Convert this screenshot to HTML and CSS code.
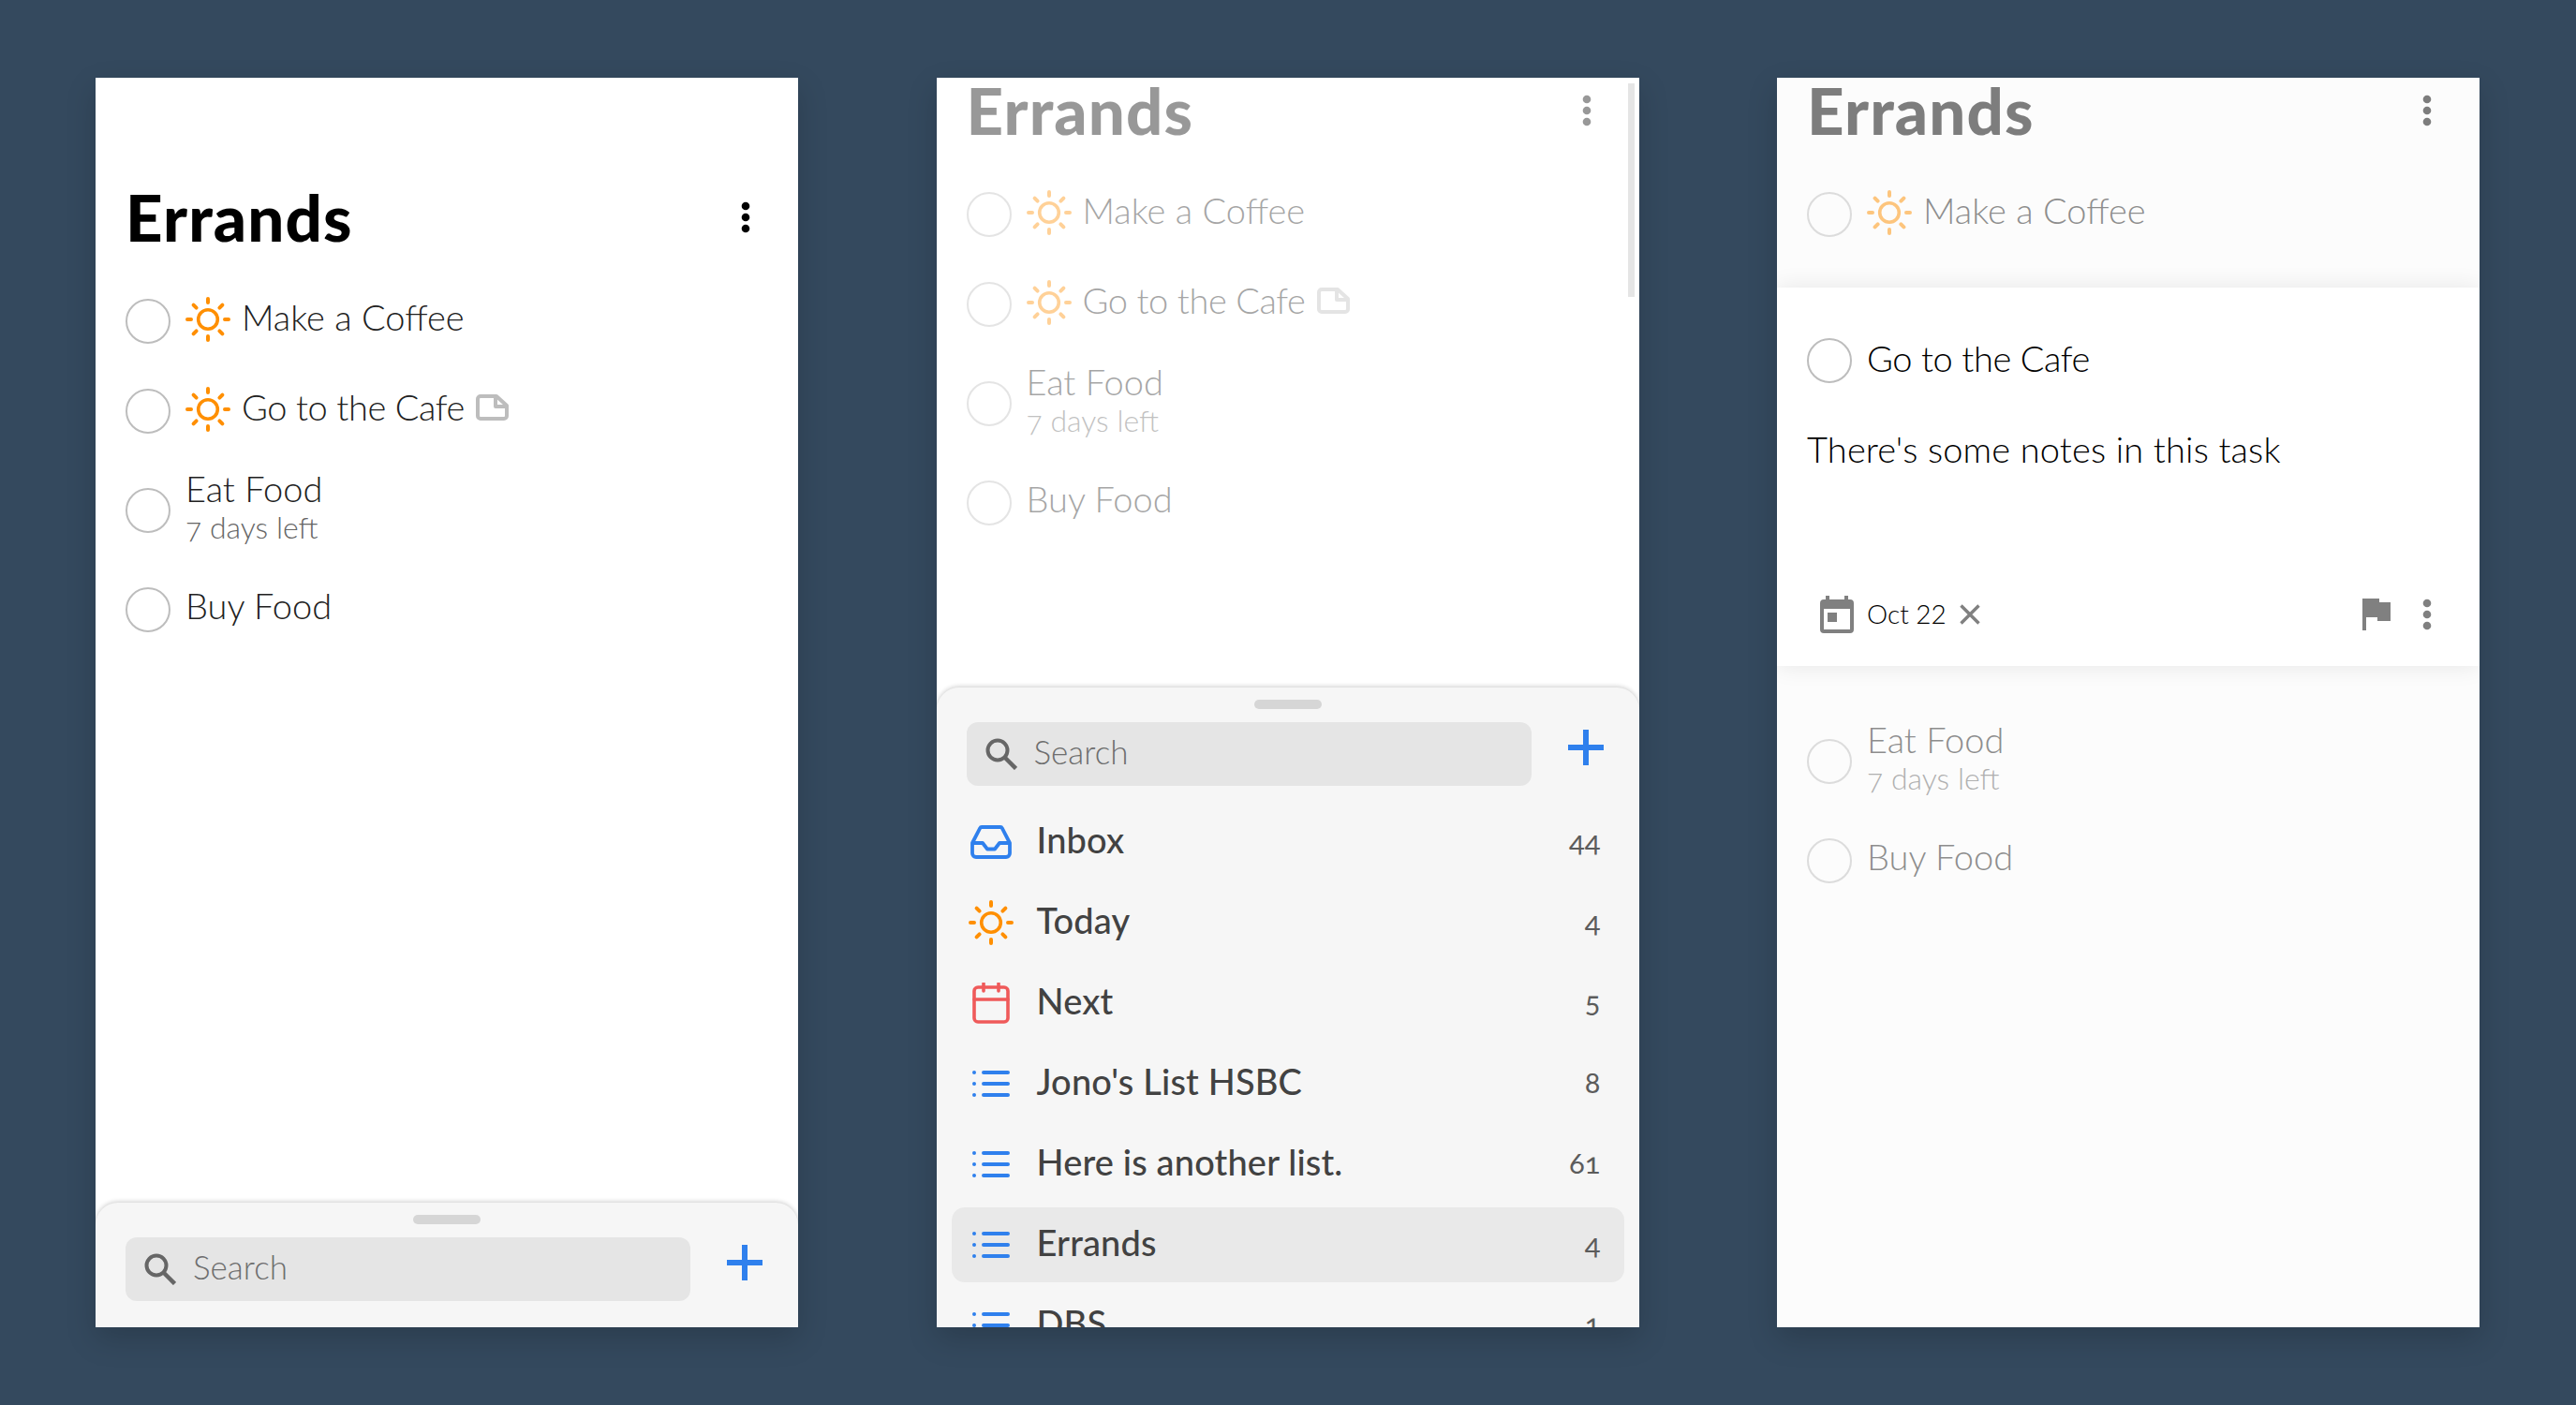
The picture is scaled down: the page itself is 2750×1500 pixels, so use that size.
FILE: index.html
```html
<!DOCTYPE html>
<html lang="en">
<head>
  <meta charset="UTF-8">
  <title>Errands</title>
  <link rel="stylesheet" href="styles.css">
</head>
<body>
  <svg class="sprite" xmlns="http://www.w3.org/2000/svg">
    <symbol id="sun" viewBox="0 0 48 48">
      <circle cx="24" cy="24" r="10.3" fill="none" stroke="currentColor" stroke-width="3.6"/>
      <path d="M24 2v4M24 42v4M2 24h4M42 24h4M8.6 8.6l3 3M36.4 36.4l3 3M8.6 39.4l3-3M36.4 11.6l3-3" fill="none" stroke="currentColor" stroke-width="4" stroke-linecap="round"/>
    </symbol>
    <symbol id="note" viewBox="0 0 35 28">
      <path d="M2 5a3 3 0 0 1 3-3h17l11 10v11a3 3 0 0 1-3 3H5a3 3 0 0 1-3-3z M21 2v11h12" fill="none" stroke="currentColor" stroke-width="4" stroke-linejoin="round"/>
    </symbol>
    <symbol id="dots" viewBox="0 0 10 34">
      <circle cx="5" cy="5" r="4.3" fill="currentColor"/>
      <circle cx="5" cy="17" r="4.3" fill="currentColor"/>
      <circle cx="5" cy="29" r="4.3" fill="currentColor"/>
    </symbol>
    <symbol id="search" viewBox="0 0 34 34">
      <circle cx="13" cy="13" r="10.5" fill="none" stroke="currentColor" stroke-width="4"/>
      <path d="M21 21l11.5 11.5" fill="none" stroke="currentColor" stroke-width="4.5"/>
    </symbol>
    <symbol id="plus" viewBox="0 0 38 38">
      <path d="M19 0v38M0 19h38" fill="none" stroke="currentColor" stroke-width="6"/>
    </symbol>
    <symbol id="inbox" viewBox="0 0 44 36">
      <path d="M12 2h20a2 2 0 0 1 1.8 1.2L42 19v11a4 4 0 0 1-4 4H6a4 4 0 0 1-4-4V19l8.2-15.800A2 2 0 0 1 12 2z M2 19h11l5 6.500h8l5-6.500h11" fill="none" stroke="currentColor" stroke-width="3.8" stroke-linejoin="round"/>
    </symbol>
    <symbol id="calendar" viewBox="0 0 40 44">
      <rect x="2" y="5" width="36" height="37" rx="4" fill="none" stroke="currentColor" stroke-width="3.6"/>
      <path d="M2 18h36M12 1v8M28 1v8" fill="none" stroke="currentColor" stroke-width="3.6" stroke-linecap="round"/>
    </symbol>
    <symbol id="list" viewBox="0 0 40 28">
      <circle cx="2" cy="2" r="2" fill="currentColor"/>
      <circle cx="2" cy="14" r="2" fill="currentColor"/>
      <circle cx="2" cy="26" r="2" fill="currentColor"/>
      <path d="M12 2h26M12 14h26M12 26h26" fill="none" stroke="currentColor" stroke-width="4" stroke-linecap="round"/>
    </symbol>
    <symbol id="event" viewBox="0 0 36 40">
      <path d="M6 0h4v4h16V0h4v4h2a4 4 0 0 1 4 4v28a4 4 0 0 1-4 4H4a4 4 0 0 1-4-4V8a4 4 0 0 1 4-4h2z M4 14v22h28V14z M8 18h10v10H8z" fill="currentColor" fill-rule="evenodd"/>
    </symbol>
    <symbol id="close" viewBox="0 0 22 22">
      <path d="M1.500 1.500l19 19M20.500 1.500l-19 19" fill="none" stroke="currentColor" stroke-width="3.400"/>
    </symbol>
    <symbol id="flag" viewBox="0 0 30 34">
      <path d="M0 0H18V4H30V24H16V20H4V34H0z" fill="currentColor"/>
    </symbol>
  </svg>

  <div class="stage">
    <!-- list view -->
    <div class="phone">
      <div class="content content-top">
        <div class="header">
          <h1 class="title">Errands</h1>
          <svg class="icon-dots"><use href="#dots"/></svg>
        </div>
        <div class="task">
          <span class="check"></span>
          <svg class="icon-sun"><use href="#sun"/></svg>
          <span class="task-name name-after-icon">Make a Coffee</span>
        </div>
        <div class="task">
          <span class="check"></span>
          <svg class="icon-sun"><use href="#sun"/></svg>
          <span class="task-name name-after-icon name-tight">Go to the Cafe</span>
          <svg class="icon-note"><use href="#note"/></svg>
        </div>
        <div class="task task-tall">
          <span class="check"></span>
          <div class="task-text">
            <div class="task-name">Eat Food</div>
            <div class="task-sub">7 days left</div>
          </div>
        </div>
        <div class="task">
          <span class="check"></span>
          <span class="task-name">Buy Food</span>
        </div>
      </div>
      <div class="sheet">
        <div class="handle"></div>
        <div class="search-row">
          <div class="search">
            <svg class="icon-search"><use href="#search"/></svg>
            <span class="search-text">Search</span>
          </div>
          <svg class="icon-plus"><use href="#plus"/></svg>
        </div>
      </div>
    </div>

    <!-- sheet pulled up -->
    <div class="phone">
      <div class="content">
        <div class="faded faded-more">
          <div class="header">
            <h1 class="title">Errands</h1>
            <svg class="icon-dots"><use href="#dots"/></svg>
          </div>
          <div class="task">
            <span class="check"></span>
            <svg class="icon-sun"><use href="#sun"/></svg>
            <span class="task-name name-after-icon">Make a Coffee</span>
          </div>
          <div class="task">
            <span class="check"></span>
            <svg class="icon-sun"><use href="#sun"/></svg>
            <span class="task-name name-after-icon name-tight">Go to the Cafe</span>
            <svg class="icon-note"><use href="#note"/></svg>
          </div>
          <div class="task task-tall">
            <span class="check"></span>
            <div class="task-text">
              <div class="task-name">Eat Food</div>
              <div class="task-sub">7 days left</div>
            </div>
          </div>
          <div class="task">
            <span class="check"></span>
            <span class="task-name">Buy Food</span>
          </div>
        </div>
        <div class="scrollbar"></div>
      </div>
      <div class="sheet sheet-open">
        <div class="handle"></div>
        <div class="search-row">
          <div class="search">
            <svg class="icon-search"><use href="#search"/></svg>
            <span class="search-text">Search</span>
          </div>
          <svg class="icon-plus"><use href="#plus"/></svg>
        </div>
        <div class="lists">
          <div class="list-row">
            <span class="list-icon"><svg class="icon-inbox"><use href="#inbox"/></svg></span>
            <span class="list-name">Inbox</span>
            <span class="list-count">44</span>
          </div>
          <div class="list-row">
            <span class="list-icon"><svg class="icon-today"><use href="#sun"/></svg></span>
            <span class="list-name">Today</span>
            <span class="list-count">4</span>
          </div>
          <div class="list-row">
            <span class="list-icon"><svg class="icon-next"><use href="#calendar"/></svg></span>
            <span class="list-name">Next</span>
            <span class="list-count">5</span>
          </div>
          <div class="list-row">
            <span class="list-icon"><svg class="icon-lines"><use href="#list"/></svg></span>
            <span class="list-name">Jono's List HSBC</span>
            <span class="list-count">8</span>
          </div>
          <div class="list-row">
            <span class="list-icon"><svg class="icon-lines"><use href="#list"/></svg></span>
            <span class="list-name">Here is another list.</span>
            <span class="list-count">61</span>
          </div>
          <div class="list-row active">
            <span class="list-icon"><svg class="icon-lines"><use href="#list"/></svg></span>
            <span class="list-name">Errands</span>
            <span class="list-count">4</span>
          </div>
          <div class="list-row">
            <span class="list-icon"><svg class="icon-lines"><use href="#list"/></svg></span>
            <span class="list-name">DBS</span>
            <span class="list-count">1</span>
          </div>
        </div>
      </div>
    </div>

    <!-- task expanded -->
    <div class="phone">
      <div class="content content-dim">
        <div class="faded">
          <div class="header">
            <h1 class="title">Errands</h1>
            <svg class="icon-dots"><use href="#dots"/></svg>
          </div>
          <div class="task">
            <span class="check"></span>
            <svg class="icon-sun"><use href="#sun"/></svg>
            <span class="task-name name-after-icon">Make a Coffee</span>
          </div>
        </div>
        <div class="card">
          <div class="task-open">
            <span class="check"></span>
            <span class="task-name card-name name-tight">Go to the Cafe</span>
          </div>
          <p class="notes">There's some notes in this task</p>
          <div class="card-foot">
            <svg class="icon-event"><use href="#event"/></svg>
            <span class="date">Oct 22</span>
            <svg class="icon-close"><use href="#close"/></svg>
            <svg class="icon-flag"><use href="#flag"/></svg>
            <svg class="icon-dots icon-dots-grey"><use href="#dots"/></svg>
          </div>
        </div>
        <div class="faded">
          <div class="task task-tall">
            <span class="check"></span>
            <div class="task-text">
              <div class="task-name">Eat Food</div>
              <div class="task-sub">7 days left</div>
            </div>
          </div>
          <div class="task">
            <span class="check"></span>
            <span class="task-name">Buy Food</span>
          </div>
        </div>
      </div>
    </div>
  </div>
</body>
</html>
```

FILE: styles.css
```css
* {
  margin: 0;
  padding: 0;
  box-sizing: border-box;
}

body {
  background-color: #34495e;
  font-family: 'Lato', 'Open Sans', sans-serif;
  color: #212121;
  height: 1500px;
  overflow: hidden;
}

.sprite {
  display: none;
}

.stage {
  display: flex;
  justify-content: space-between;
  padding: 83px 103px 0 102px;
}

.phone {
  width: 750px;
  height: 1334px;
  background-color: #fff;
  display: flex;
  flex-direction: column;
  overflow: hidden;
  box-shadow: 0 12px 30px rgba(0,0,0,0.17);
}

.content {
  flex: 1;
  min-height: 0;
  position: relative;
}

.content-top {
  padding-top: 114px;
}

.content-dim {
  background-color: #fcfcfc;
}

.faded {
  opacity: 0.5;
}

.faded-more {
  opacity: 0.4;
}

.header {
  height: 98px;
  padding: 0 51px 28px 32px;
  display: flex;
  align-items: center;
  justify-content: space-between;
}

.title {
  font-size: 69px;
  font-weight: 900;
  line-height: 69px;
  color: #000;
  letter-spacing: 1.1px;
  margin-bottom: 2px;
}

.icon-dots {
  width: 10px;
  height: 34px;
  color: #000;
}

.icon-dots-grey {
  color: #808080;
  margin-left: 34px;
}

.task {
  height: 96px;
  padding-left: 32px;
  display: flex;
  align-items: center;
}

.task-tall {
  height: 116px;
}

.check {
  width: 48px;
  height: 48px;
  border: 2.5px solid #bdbdbd;
  border-radius: 50%;
  flex-shrink: 0;
}

.icon-sun {
  width: 48px;
  height: 48px;
  margin: 0 0 4px 16px;
  color: #ff8f00;
}

.icon-note {
  width: 35px;
  height: 28px;
  margin: 0 0 8px 12px;
  color: #bdbdbd;
}

.task-name {
  font-size: 38px;
  font-weight: 300;
  margin-left: 16px;
  margin-bottom: 10px;
}

.name-after-icon {
  margin-left: 12px;
}

.name-tight {
  letter-spacing: -0.4px;
}

.task-text {
  margin-bottom: 8px;
}

.task-text .task-name {
  line-height: 44px;
  margin-bottom: 0;
}

.task-sub {
  font-size: 32px;
  font-weight: 300;
  color: #666;
  line-height: 40px;
  margin-left: 16px;
  font-feature-settings: "onum";
}

.sheet {
  height: 133px;
  flex-shrink: 0;
  background-color: #f6f6f6;
  border-radius: 24px 24px 0 0;
  box-shadow: 0 -1px 5px rgba(0,0,0,0.2);
  position: relative;
  overflow: hidden;
}

.sheet-open {
  height: 683px;
}

.handle {
  width: 72px;
  height: 10px;
  margin: 13px auto 14px;
  background-color: #d6d6d6;
  border-radius: 5px;
}

.search-row {
  padding-left: 32px;
  display: flex;
  align-items: center;
}

.search {
  width: 603px;
  height: 68px;
  padding-left: 20px;
  background-color: #e5e5e5;
  border-radius: 12px;
  display: flex;
  align-items: center;
  font-size: 35px;
  font-weight: 300;
  color: #6e6e6e;
}

.search-text {
  margin-bottom: 6px;
}

.icon-search {
  width: 34px;
  height: 34px;
  margin-right: 18px;
  color: #666;
}

.icon-plus {
  width: 38px;
  height: 38px;
  margin: 0 0 14px 39px;
  color: #2f80ed;
}

.lists {
  margin: 20px 16px 0;
  display: flex;
  flex-direction: column;
  gap: 6px;
}

.list-row {
  height: 80px;
  flex-shrink: 0;
  padding: 0 25px 0 18px;
  border-radius: 14px;
  display: flex;
  align-items: center;
}

.list-row.active {
  background-color: #e9e9e9;
}

.list-icon {
  width: 48px;
  margin-right: 25px;
  flex-shrink: 0;
  display: flex;
  justify-content: center;
}

.icon-inbox {
  width: 44px;
  height: 36px;
  color: #2f80ed;
}

.icon-today {
  width: 48px;
  height: 48px;
  color: #ff8f00;
}

.icon-next {
  width: 40px;
  height: 44px;
  color: #ef5a5a;
}

.icon-lines {
  width: 40px;
  height: 28px;
  color: #2f80ed;
}

.list-name {
  flex: 1;
  font-size: 38px;
  font-weight: 500;
  letter-spacing: 0.15px;
  color: #424242;
  margin-bottom: 6px;
}

.list-count {
  font-size: 31px;
  font-weight: 400;
  color: #5c5c5c;
  margin-bottom: 4px;
  font-feature-settings: "onum";
}

.scrollbar {
  position: absolute;
  top: 6px;
  right: 5px;
  width: 7px;
  height: 228px;
  background-color: #e5e5e5;
}

.card {
  height: 404px;
  margin: 30px 0 44px;
  padding: 52px 51px 0 32px;
  background-color: #fff;
  box-shadow: 0 0 24px rgba(0,0,0,0.09);
  position: relative;
}

.task-open {
  display: flex;
  align-items: center;
}

.card-name {
  color: #000;
  margin-bottom: 6px;
}

.notes {
  margin-top: 46px;
  font-size: 38px;
  font-weight: 300;
  letter-spacing: 0.15px;
  line-height: 44px;
  color: #000;
}

.card-foot {
  margin-top: 135px;
  padding-left: 14px;
  display: flex;
  align-items: center;
}

.icon-event {
  width: 36px;
  height: 40px;
  color: #808080;
}

.date {
  margin-left: 14px;
  margin-bottom: 2px;
  font-size: 28px;
  font-weight: 300;
  color: #000;
}

.icon-close {
  width: 22px;
  height: 22px;
  margin-left: 14px;
  color: #808080;
}

.icon-flag {
  width: 30px;
  height: 34px;
  margin-left: auto;
  color: #808080;
}
```
